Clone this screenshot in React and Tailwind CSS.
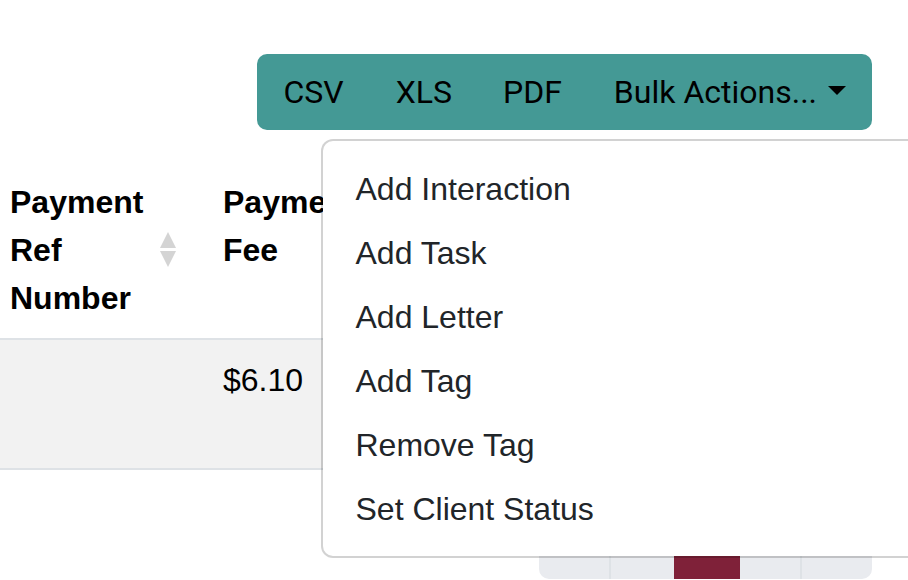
import React from "react";

const actions = [
  "Add Interaction",
  "Add Task",
  "Add Letter",
  "Add Tag",
  "Remove Tag",
  "Set Client Status",
];

const SortIcon = () => (
  <svg width="16" height="36" viewBox="0 0 16 36" className="absolute left-[160px] top-[70px]">
    <path d="M8 0 L16 16 L0 16 Z" fill="#d4d4d4" />
    <path d="M0 19 L16 19 L8 35 Z" fill="#d4d4d4" />
  </svg>
);

const App = () => {
  return (
    <div className="relative w-[908px] h-[580px] overflow-hidden bg-white font-['Liberation_Sans',Arial,sans-serif] text-[32px] leading-[48px] text-[#212529]">
      {/* export toolbar + bulk menu */}
      <div className="flex justify-end pr-[36px] pt-[54px]">
        <div className="relative z-10">
          <div className="flex rounded-[10px] bg-[#449995] font-['Roboto',sans-serif] text-black">
            <button className="py-[14px] pl-[26px] pr-[26px]">CSV</button>
            <button className="py-[14px] pl-[26px] pr-[25px]">XLS</button>
            <button className="py-[14px] pl-[26px] pr-[26px]">PDF</button>
            <button className="flex items-center py-[14px] pl-[26px] pr-[26px]">
              Bulk Actions...
              <span className="ml-[11px] mb-[4px] inline-block w-0 h-0 border-x-[9px] border-t-[9px] border-x-transparent border-t-black"></span>
            </button>
          </div>

          {/* bulk actions dropdown */}
          <div className="absolute top-full left-[64px] mt-[9px] w-[620px] rounded-[12px] border-2 border-black/[0.175] bg-white bg-clip-padding pt-[16px] pb-[15px]">
            {actions.map((a) => (
              <div key={a} className="px-[32px] py-2 leading-[48px] whitespace-nowrap">
                {a}
              </div>
            ))}
          </div>
        </div>
      </div>

      {/* table */}
      <div className="mt-[32px] text-black">
        <div className="flex border-b-2 border-[#dee2e6] font-bold">
          <div className="relative w-[207px] shrink-0 py-4 pl-[10px]">
            <div className="w-[140px]">Payment Ref Number</div>
            <SortIcon />
          </div>
          <div className="w-[180px] shrink-0 py-4 pl-4">
            <div className="w-[140px]">Payment Fee</div>
          </div>
          <div className="w-[220px] shrink-0 py-4 pl-4">Status</div>
          <div className="w-[220px] shrink-0 py-4 pl-4">Date</div>
        </div>
        <div className="flex h-[130px] border-b-2 border-[#dee2e6] bg-[#f2f2f2]">
          <div className="w-[207px] shrink-0 py-4 pl-[10px]"></div>
          <div className="w-[180px] shrink-0 py-4 pl-4">$6.10</div>
          <div className="w-[220px] shrink-0 py-4 pl-4">
            <div>Paid</div>
            <div>Online</div>
          </div>
          <div className="w-[220px] shrink-0 py-4 pl-4">01/02/24</div>
        </div>
      </div>

      {/* pagination */}
      <div className="mt-[33px] flex justify-end pr-[36px]">
        <div className="flex h-[76px] overflow-hidden rounded-[10px] bg-[#e9ebef] text-[#6c757d]">
          <div className="flex w-[72px] items-center justify-center border-r-2 border-[#dee2e6]">«</div>
          <div className="flex w-[63px] items-center justify-center">‹</div>
          <div className="flex w-[66px] items-center justify-center bg-[#7f2139] text-white">1</div>
          <div className="flex w-[62px] items-center justify-center border-r-2 border-[#dee2e6]">›</div>
          <div className="flex w-[70px] items-center justify-center">»</div>
        </div>
      </div>
    </div>
  );
};

export default App;
